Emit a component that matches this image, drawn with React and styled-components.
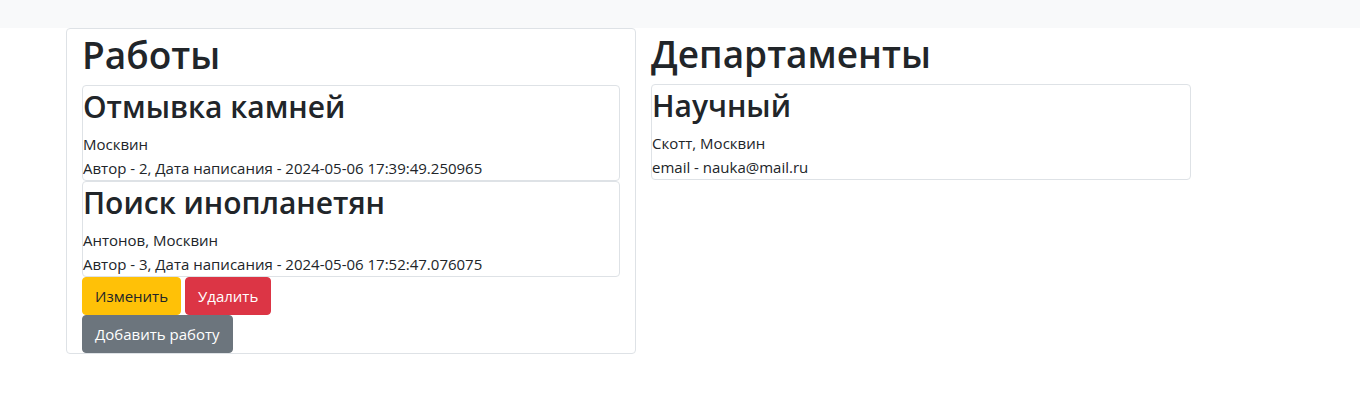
import React from "react";
import styled, { createGlobalStyle } from "styled-components";

const GlobalStyle = createGlobalStyle`
  *, *::before, *::after { box-sizing: border-box; }
  body {
    margin: 0;
    background: #fff;
    color: #212529;
    font: 400 15px/24px "Segoe UI", "Open Sans", "Noto Sans", sans-serif;
  }
`;

const TopBar = styled.header`
  height: 28px;
  background: #f8f9fa;
`;

const Columns = styled.main`
  display: grid;
  grid-template-columns: 1fr 1fr;
  align-items: start;
  max-width: 1206px;
  padding-left: 66px;
`;

const Column = styled.section`
  padding: 0 15px;
  border: ${(p) => (p.$framed ? "1px solid #dee2e6" : "0")};
  border-radius: 4px;
`;

const Title = styled.h1`
  margin: 0 0 4px;
  font-size: 37px;
  font-weight: 600;
  line-height: 52px;
`;

const Card = styled.article`
  border: 1px solid #dee2e6;
  border-radius: 4px;
`;

const CardTitle = styled.h2`
  margin: 0 0 4px;
  font-size: 30px;
  font-weight: 600;
  line-height: 42px;
`;

const Line = styled.p`
  margin: 0;
`;

const Actions = styled.div`
  display: flex;
  gap: 4px;
`;

const tones = {
  warning: ["#ffc107", "#212529"],
  danger: ["#dc3545", "#fff"],
  secondary: ["#6c757d", "#fff"],
};

const Button = styled.button`
  padding: 6px 12px;
  border: 1px solid ${(p) => tones[p.$tone][0]};
  border-radius: 4px;
  background: ${(p) => tones[p.$tone][0]};
  color: ${(p) => tones[p.$tone][1]};
  font: inherit;
  cursor: pointer;
`;

const jobs = [
  {
    title: "Отмывка камней",
    team: "Москвин",
    info: "Автор - 2, Дата написания - 2024-05-06 17:39:49.250965",
  },
  {
    title: "Поиск инопланетян",
    team: "Антонов, Москвин",
    info: "Автор - 3, Дата написания - 2024-05-06 17:52:47.076075",
  },
];

const departments = [
  { title: "Научный", team: "Скотт, Москвин", info: "email - nauka@mail.ru" },
];

function Entry({ title, team, info }) {
  return (
    <Card>
      <CardTitle>{title}</CardTitle>
      <Line>{team}</Line>
      <Line>{info}</Line>
    </Card>
  );
}

export default function App() {
  return (
    <>
      <GlobalStyle />
      <TopBar />
      <Columns>
        <Column $framed>
          <Title>Работы</Title>
          {jobs.map((job) => (
            <Entry key={job.title} {...job} />
          ))}
          <Actions>
            <Button type="button" $tone="warning">Изменить</Button>
            <Button type="button" $tone="danger">Удалить</Button>
          </Actions>
          <Actions>
            <Button type="button" $tone="secondary">Добавить работу</Button>
          </Actions>
        </Column>
        <Column>
          <Title>Департаменты</Title>
          {departments.map((department) => (
            <Entry key={department.title} {...department} />
          ))}
        </Column>
      </Columns>
    </>
  );
}
